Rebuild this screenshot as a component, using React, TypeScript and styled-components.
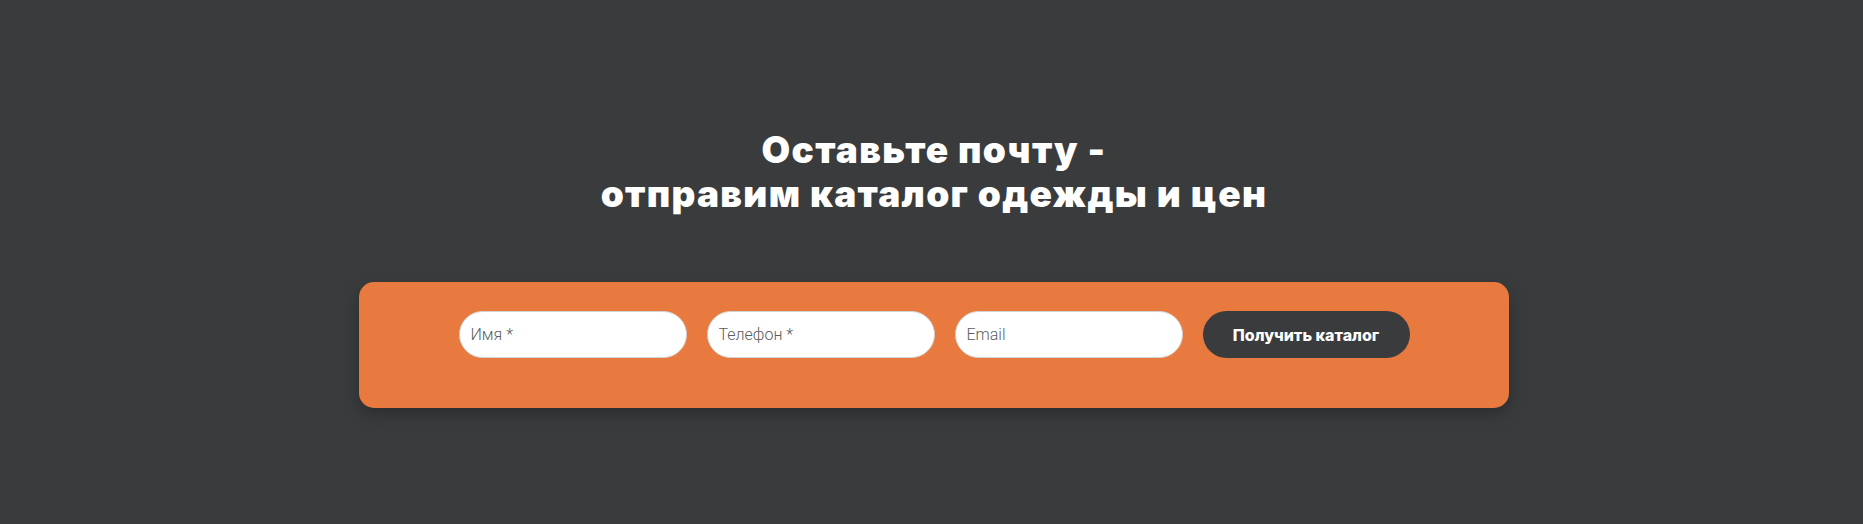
import React from 'react'
import styled, { createGlobalStyle } from 'styled-components'

const GlobalStyle = createGlobalStyle`
  html, body {
    margin: 0;
    padding: 0;
    background: #3a3b3d;
  }
  * {
    box-sizing: border-box;
  }
`

const Section = styled.section`
  min-height: 524px;
  padding: 128px 0 0 5px;
  display: flex;
  flex-direction: column;
  align-items: center;
  font-family: Inter, "Noto Sans", sans-serif;
`

const Title = styled.h2`
  margin: 0 0 66px;
  color: #fff;
  font-size: 37px;
  font-weight: 900;
  line-height: 44px;
  letter-spacing: 1.3px;
  text-align: center;
`

const Panel = styled.form`
  width: 1150px;
  padding: 29px 0 50px;
  background: #e8793f;
  border-radius: 15px;
  box-shadow: 0 6px 16px rgba(0, 0, 0, 0.25);
  display: flex;
  justify-content: center;
  gap: 20px;
`

const Field = styled.input`
  width: 228px;
  height: 47px;
  padding: 0 11px;
  border: 1px solid #d4d4d4;
  border-radius: 24px;
  background: #fff;
  font-family: Roboto, "Liberation Sans", sans-serif;
  font-size: 16px;
  font-weight: 300;
  color: #333;
  outline: none;

  &::placeholder {
    color: #5c5c5c;
  }
`

const Submit = styled.button`
  width: 207px;
  height: 47px;
  border: none;
  border-radius: 24px;
  background: #3a3b3d;
  color: #fff;
  font-family: Inter, "Noto Sans", sans-serif;
  font-size: 16px;
  font-weight: 800;
  cursor: pointer;
`

function CatalogRequest() {
  return (
    <Section>
      <Title>
        Оставьте почту -
        <br />
        отправим каталог одежды и цен
      </Title>
      <Panel onSubmit={e => e.preventDefault()}>
        <Field type="text" placeholder="Имя *" />
        <Field type="tel" placeholder="Телефон *" />
        <Field type="email" placeholder="Email" />
        <Submit type="submit">Получить каталог</Submit>
      </Panel>
    </Section>
  )
}

export default function App() {
  return (
    <>
      <GlobalStyle />
      <CatalogRequest />
    </>
  )
}
